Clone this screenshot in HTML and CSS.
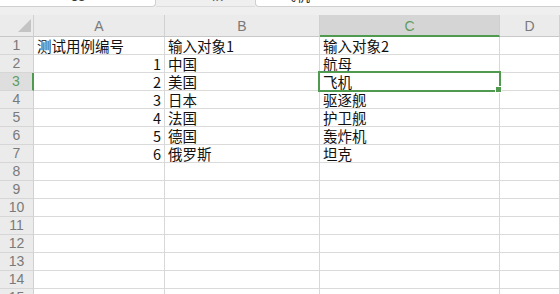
FILE: index.html
```html
<!DOCTYPE html>
<html lang="zh-CN">
  <head>
    <meta charset="UTF-8" />
    <title>Sheet1</title>
    <link rel="stylesheet" href="styles.css">
  </head>
  <body>
    <div class="toolbar">
      <div class="namebox"><span class="cut">C3</span></div>
      <div class="fx"><span class="cut">fx</span></div>
      <div class="formula"><span class="cut">飞机</span></div>
    </div>

    <div class="sheet">
      <div class="corner"><span class="tri"></span></div>
      <div class="colhead">A</div>
      <div class="colhead">B</div>
      <div class="colhead active">C</div>
      <div class="colhead">D</div>

      <div class="rowhead">1</div>
      <div class="cell">测试用例编号</div>
      <div class="cell">输入对象1</div>
      <div class="cell">输入对象2</div>
      <div class="cell"></div>

      <div class="rowhead">2</div>
      <div class="cell num">1</div>
      <div class="cell">中国</div>
      <div class="cell">航母</div>
      <div class="cell"></div>

      <div class="rowhead active">3</div>
      <div class="cell num">2</div>
      <div class="cell">美国</div>
      <div class="cell selected">飞机</div>
      <div class="cell"></div>

      <div class="rowhead">4</div>
      <div class="cell num">3</div>
      <div class="cell">日本</div>
      <div class="cell">驱逐舰</div>
      <div class="cell"></div>

      <div class="rowhead">5</div>
      <div class="cell num">4</div>
      <div class="cell">法国</div>
      <div class="cell">护卫舰</div>
      <div class="cell"></div>

      <div class="rowhead">6</div>
      <div class="cell num">5</div>
      <div class="cell">德国</div>
      <div class="cell">轰炸机</div>
      <div class="cell"></div>

      <div class="rowhead">7</div>
      <div class="cell num">6</div>
      <div class="cell">俄罗斯</div>
      <div class="cell">坦克</div>
      <div class="cell"></div>

      <div class="rowhead">8</div>
      <div class="cell"></div><div class="cell"></div><div class="cell"></div><div class="cell"></div>
      <div class="rowhead">9</div>
      <div class="cell"></div><div class="cell"></div><div class="cell"></div><div class="cell"></div>
      <div class="rowhead">10</div>
      <div class="cell"></div><div class="cell"></div><div class="cell"></div><div class="cell"></div>
      <div class="rowhead">11</div>
      <div class="cell"></div><div class="cell"></div><div class="cell"></div><div class="cell"></div>
      <div class="rowhead">12</div>
      <div class="cell"></div><div class="cell"></div><div class="cell"></div><div class="cell"></div>
      <div class="rowhead">13</div>
      <div class="cell"></div><div class="cell"></div><div class="cell"></div><div class="cell"></div>
      <div class="rowhead">14</div>
      <div class="cell"></div><div class="cell"></div><div class="cell"></div><div class="cell"></div>
      <div class="rowhead">15</div>
      <div class="cell"></div><div class="cell"></div><div class="cell"></div><div class="cell"></div>
    </div>
  </body>
</html>
```

FILE: styles.css
```css
* {
  margin: 0;
  padding: 0;
  box-sizing: border-box;
}
body {
  font-family: "Noto Sans CJK SC", "Liberation Sans", sans-serif;
  background-color: #fff;
  width: 560px;
  height: 294px;
  overflow: hidden;
}

/* formula bar, mostly scrolled out of view */
.toolbar {
  display: flex;
  height: 15px;
  background-color: #efefef;
}
.bar-item,
.namebox,
.fx,
.formula {
  height: 7px;
  overflow: hidden;
  display: flex;
  font-size: 14px;
  color: #333;
}
.cut {
  line-height: 14px;
  margin-top: -12px;
}
.namebox {
  width: 156px;
  justify-content: center;
  background-color: #fff;
  border-right: 1px solid #cfcfcf;
  border-bottom: 1px solid #cfcfcf;
  border-bottom-right-radius: 4px;
}
.fx {
  width: 99px;
  justify-content: flex-end;
  padding-right: 32px;
  border-bottom: 1px solid #dcdcdc;
  color: #666;
}
.formula {
  flex: 1;
  justify-content: flex-start;
  padding-left: 26px;
  background-color: #fff;
  border-left: 1px solid #cfcfcf;
  border-bottom: 1px solid #cfcfcf;
  border-bottom-left-radius: 4px;
}

.sheet {
  display: grid;
  grid-template-columns: 34px 131px 155px 180px 1fr;
  grid-template-rows: 22px repeat(15, 18px);
}

.corner,
.colhead,
.rowhead {
  background-color: #ebebeb;
  color: #7a7a7a;
  font-family: "Liberation Sans", sans-serif;
  font-size: 14px;
  border-right: 1px solid #d0d0d0;
  border-bottom: 1px solid #c8c8c8;
}
.corner {
  position: relative;
}
.tri {
  position: absolute;
  right: 2px;
  bottom: 4px;
  width: 0;
  height: 0;
  border-left: 13px solid transparent;
  border-bottom: 13px solid #c4c4c4;
}
.colhead {
  display: flex;
  align-items: center;
  justify-content: center;
  padding-top: 1px;
}
.colhead.active {
  background-color: #d5d5d5;
  color: #5f9c5f;
  border-bottom: 2px solid #4f9a4f;
}
.rowhead {
  display: flex;
  align-items: center;
  justify-content: center;
  line-height: 17px;
  border-bottom-color: #d6d6d6;
}
.rowhead.active {
  background-color: #dedede;
  color: #5f9c5f;
  border-right: 2px solid #4f9a4f;
}

.cell {
  font-size: 14.5px;
  line-height: 17px;
  color: #111;
  padding: 0 3px;
  white-space: nowrap;
  border-right: 1px solid #d8d8d8;
  border-bottom: 1px solid #dadada;
}
.cell.num {
  text-align: right;
}
.cell.selected {
  position: relative;
}
.cell.selected::before {
  content: "";
  position: absolute;
  left: -2px;
  top: -2px;
  right: -2px;
  bottom: -2px;
  border: 2px solid #4f9a4f;
}
.cell.selected::after {
  content: "";
  position: absolute;
  right: -3px;
  bottom: -3px;
  width: 5px;
  height: 5px;
  background-color: #4f9a4f;
  border: 1px solid #fff;
}
```
